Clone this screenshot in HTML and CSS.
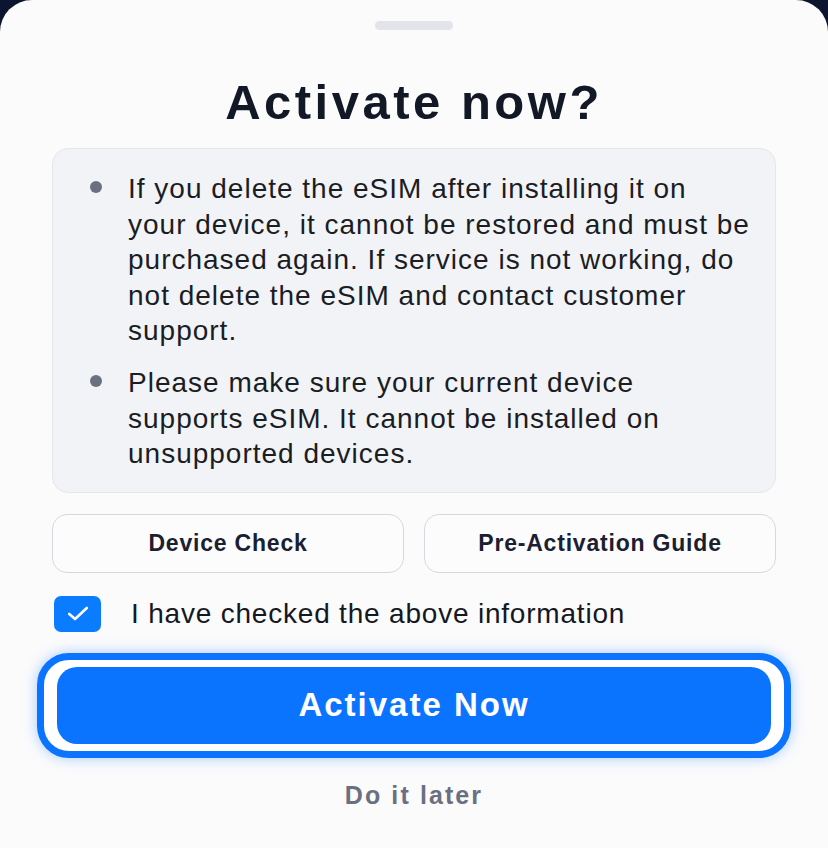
FILE: index.html
```html
<!DOCTYPE html>
<html lang="en">
<head>
<meta charset="utf-8">
<title>Activate eSIM</title>
<link rel="stylesheet" href="styles.css">
</head>
<body>
  <div class="sheet">
    <div class="handle"></div>
    <h1 class="title">Activate now?</h1>

    <div class="notice">
      <ul class="notice-list">
        <li>If you delete the eSIM after installing it on your device, it cannot be restored and must be purchased again. If service is not working, do not delete the eSIM and contact customer support.</li>
        <li>Please make sure your current device supports eSIM. It cannot be installed on unsupported devices.</li>
      </ul>
    </div>

    <div class="links">
      <button class="link-btn" type="button">Device Check</button>
      <button class="link-btn" type="button">Pre-Activation Guide</button>
    </div>

    <label class="confirm">
      <span class="checkbox">
        <svg viewBox="0 0 26 20" width="24" height="19" aria-hidden="true">
          <path d="M3.5 10.5L9.8 16L22.5 4" fill="none" stroke="#fff" stroke-width="2.8" stroke-linecap="round" stroke-linejoin="round"/>
        </svg>
      </span>
      <span class="confirm-text">I have checked the above information</span>
    </label>

    <div class="primary-ring">
      <button class="primary" type="button">Activate Now</button>
    </div>

    <button class="later" type="button">Do it later</button>
  </div>
</body>
</html>
```

FILE: styles.css
```css
* {
  box-sizing: border-box;
}

html, body {
  margin: 0;
  padding: 0;
  height: 100%;
}

body {
  background: #0c1430;
  font-family: "Liberation Sans", Arial, sans-serif;
  color: #111827;
}

/* bottom sheet */
.sheet {
  min-height: 848px;
  background: #fbfbfc;
  border-radius: 32px 32px 0 0;
  padding: 21px 52px 0 52px;
  display: flex;
  flex-direction: column;
}

.handle {
  align-self: center;
  width: 78px;
  height: 9px;
  border-radius: 5px;
  background: #e3e4e9;
}

.title {
  margin: 46px 0 0 0;
  text-align: center;
  font-weight: 700;
  font-size: 49px;
  line-height: 52px;
  color: #121826;
  letter-spacing: 3.5px;
}

/* warning notes */
.notice {
  margin-top: 20px;
  background: #f2f3f6;
  border: 1px solid #e6e7eb;
  border-radius: 16px;
  padding: 22px 25px 20px 34px;
}

.notice-list {
  list-style: none;
  margin: 0;
  padding: 0;
  display: flex;
  flex-direction: column;
  gap: 16.5px;
}

.notice-list li {
  position: relative;
  padding-left: 41px;
  font-size: 28px;
  line-height: 35.5px;
  color: #1a1d24;
  letter-spacing: 1px;
}

.notice-list li::before {
  content: "";
  position: absolute;
  left: 3px;
  top: 10px;
  width: 12px;
  height: 12px;
  border-radius: 50%;
  background: #6b7080;
}

/* secondary links */
.links {
  margin-top: 21px;
  display: grid;
  grid-template-columns: 1fr 1fr;
  gap: 20px;
}

.link-btn {
  height: 59px;
  background: #fcfcfd;
  border: 1.5px solid #d6d8de;
  border-radius: 15px;
  font-family: "Liberation Sans", Arial, sans-serif;
  font-size: 23px;
  font-weight: 700;
  color: #1a2030;
  letter-spacing: 0.8px;
}

/* confirmation checkbox */
.confirm {
  margin-top: 23px;
  display: flex;
  align-items: center;
  gap: 30px;
}

.checkbox {
  flex: none;
  width: 47px;
  height: 36px;
  margin-left: 2px;
  border-radius: 7px;
  background: #0a7cff;
  display: flex;
  align-items: center;
  justify-content: center;
}

.confirm-text {
  font-size: 28px;
  color: #15181f;
  letter-spacing: 0.8px;
}

/* primary action with focus ring */
.primary-ring {
  margin: 21px -15px 0 -15px;
  border: 7px solid #0a74ff;
  border-radius: 32px;
  padding: 7px 13px;
  box-shadow: 0 0 14px rgba(10, 116, 255, 0.35);
  background: #ffffff;
}

.primary {
  display: block;
  width: 100%;
  height: 77px;
  border: none;
  border-radius: 20px;
  background: #0a74ff;
  color: #ffffff;
  font-family: "Liberation Sans", Arial, sans-serif;
  font-weight: 700;
  font-size: 33px;
  letter-spacing: 2px;
}

.later {
  align-self: center;
  margin-top: 23px;
  background: none;
  border: none;
  padding: 0;
  font-family: "Liberation Sans", Arial, sans-serif;
  font-weight: 700;
  font-size: 25px;
  color: #6b7080;
  letter-spacing: 2.1px;
}
```
